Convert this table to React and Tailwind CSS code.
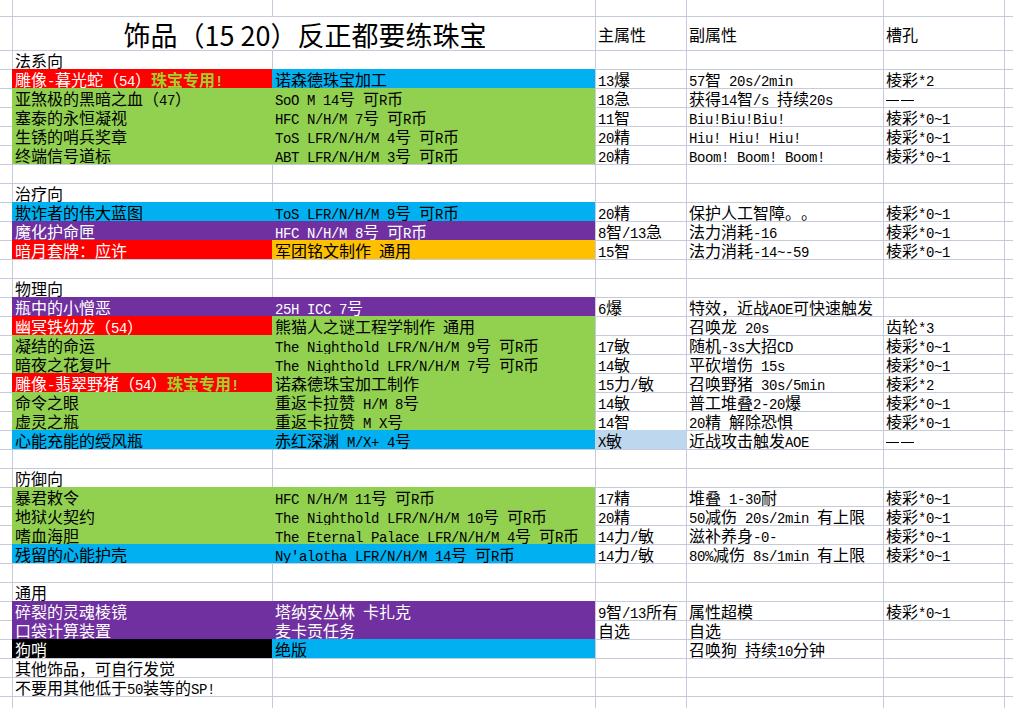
import React from 'react'

const cols = 'grid grid-cols-[12px_260px_323px_91px_197px_121px_9px]'

const fills = {
  red: 'bg-[#ff0000] border-[#ff0000] text-white',
  blue: 'bg-[#00b0f0] border-[#00b0f0] text-black',
  green: 'bg-[#92d050] border-[#92d050] text-black',
  purple: 'bg-[#7030a0] border-[#7030a0] text-white',
  orange: 'bg-[#ffc000] border-[#ffc000] text-black',
  black: 'bg-black border-black text-white',
  pale: 'bg-[#bdd7ee] border-[#bdd7ee] text-black',
}
const plain = 'bg-white border-[#c6cbdb] text-black'

// ascii runs get a narrow mono face so they take half a CJK cell, like SimSun
const Txt = ({ s }) => {
  if (!s) return null
  if (s === '——') {
    return (
      <span className="inline-flex gap-[2px] align-middle">
        <span className="inline-block h-[1px] w-[13px] bg-current" />
        <span className="inline-block h-[1px] w-[13px] bg-current" />
      </span>
    )
  }
  const parts = s.split(/([\x20-\x7e]+|（|）)/)
  return parts.map((p, i) => {
    if (p === '（') return <span key={i} className="inline-block w-[16px] text-right">（</span>
    if (p === '）') return <span key={i} className="inline-block w-[16px] text-left">）</span>
    if (/^[\x20-\x7e]+$/.test(p))
      return (
        <span key={i} className="font-['Liberation_Mono',monospace] text-[14px] tracking-[-0.4px]">{p}</span>
      )
    return p ? <span key={i}>{p}</span> : null
  })
}

const Cell = ({ children, fill, first, top = true, className = '' }) => (
  <div
    className={`h-full overflow-hidden whitespace-pre pl-[2px] ${first ? '' : 'border-l'} ${top ? 'border-t' : ''} ${fill ? fills[fill] : plain} ${className}`}
  >
    {children}
  </div>
)

const rows = [
  { a: '法系向' },
  { a: '雕像-暮光蛇（54）', hl: '珠宝专用!', aBg: 'red', b: '诺森德珠宝加工', bBg: 'blue', c: '13爆', d: '57智 20s/2min', e: '棱彩*2' },
  { a: '亚煞极的黑暗之血（47）', aBg: 'green', b: 'SoO M 14号 可R币', bBg: 'green', c: '18急', d: '获得14智/s 持续20s', e: '——' },
  { a: '塞泰的永恒凝视', aBg: 'green', b: 'HFC N/H/M 7号 可R币', bBg: 'green', c: '11智', d: 'Biu!Biu!Biu!', e: '棱彩*0~1' },
  { a: '生锈的哨兵奖章', aBg: 'green', b: 'ToS LFR/N/H/M 4号 可R币', bBg: 'green', c: '20精', d: 'Hiu! Hiu! Hiu!', e: '棱彩*0~1' },
  { a: '终端信号道标', aBg: 'green', b: 'ABT LFR/N/H/M 3号 可R币', bBg: 'green', c: '20精', d: 'Boom! Boom! Boom!', e: '棱彩*0~1' },
  {},
  { a: '治疗向' },
  { a: '欺诈者的伟大蓝图', aBg: 'blue', b: 'ToS LFR/N/H/M 9号 可R币', bBg: 'blue', c: '20精', d: '保护人工智障。。', e: '棱彩*0~1' },
  { a: '魔化护命匣', aBg: 'purple', b: 'HFC N/H/M 8号 可R币', bBg: 'purple', c: '8智/13急', d: '法力消耗-16', e: '棱彩*0~1' },
  { a: '暗月套牌：应许', aBg: 'red', b: '军团铭文制作 通用', bBg: 'orange', c: '15智', d: '法力消耗-14~-59', e: '棱彩*0~1' },
  {},
  { a: '物理向' },
  { a: '瓶中的小憎恶', aBg: 'purple', b: '25H ICC 7号', bBg: 'purple', c: '6爆', d: '特效，近战AOE可快速触发', e: '' },
  { a: '幽冥铁幼龙（54）', aBg: 'red', b: '熊猫人之谜工程学制作 通用', bBg: 'green', c: '', d: '召唤龙 20s', e: '齿轮*3' },
  { a: '凝结的命运', aBg: 'green', b: 'The Nighthold LFR/N/H/M 9号 可R币', bBg: 'green', c: '17敏', d: '随机-3s大招CD', e: '棱彩*0~1' },
  { a: '暗夜之花复叶', aBg: 'green', b: 'The Nighthold LFR/N/H/M 7号 可R币', bBg: 'green', c: '14敏', d: '平砍增伤 15s', e: '棱彩*0~1' },
  { a: '雕像-翡翠野猪（54）', hl: '珠宝专用!', aBg: 'red', b: '诺森德珠宝加工制作', bBg: 'green', c: '15力/敏', d: '召唤野猪 30s/5min', e: '棱彩*2' },
  { a: '命令之眼', aBg: 'green', b: '重返卡拉赞 H/M 8号', bBg: 'green', c: '14敏', d: '普工堆叠2-20爆', e: '棱彩*0~1' },
  { a: '虚灵之瓶', aBg: 'green', b: '重返卡拉赞 M X号', bBg: 'green', c: '14智', d: '20精 解除恐惧', e: '棱彩*0~1' },
  { a: '心能充能的绶风瓶', aBg: 'blue', b: '赤红深渊 M/X+ 4号', bBg: 'blue', c: 'X敏', cBg: 'pale', d: '近战攻击触发AOE', e: '——' },
  {},
  { a: '防御向' },
  { a: '暴君敕令', aBg: 'green', b: 'HFC N/H/M 11号 可R币', bBg: 'green', c: '17精', d: '堆叠 1-30耐', e: '棱彩*0~1' },
  { a: '地狱火契约', aBg: 'green', b: 'The Nighthold LFR/N/H/M 10号 可R币', bBg: 'green', c: '20精', d: '50减伤 20s/2min 有上限', e: '棱彩*0~1' },
  { a: '嗜血海胆', aBg: 'green', b: 'The Eternal Palace LFR/N/H/M 4号 可R币', bBg: 'green', c: '14力/敏', d: '滋补养身-0-', e: '棱彩*0~1' },
  { a: '残留的心能护壳', aBg: 'blue', b: "Ny'alotha LFR/N/H/M 14号 可R币", bBg: 'blue', c: '14力/敏', d: '80%减伤 8s/1min 有上限', e: '棱彩*0~1' },
  {},
  { a: '通用' },
  { a: '碎裂的灵魂棱镜', aBg: 'purple', b: '塔纳安丛林 卡扎克', bBg: 'purple', c: '9智/13所有', d: '属性超模', e: '棱彩*0~1' },
  { a: '口袋计算装置', aBg: 'purple', b: '麦卡贡任务', bBg: 'purple', c: '自选', d: '自选', e: '' },
  { a: '狗哨', aBg: 'black', b: '绝版', bBg: 'blue', c: '', d: '召唤狗 持续10分钟', e: '' },
  { a: '其他饰品，可自行发觉' },
  { a: '不要用其他低于50装等的SP!' },
  {},
]

const Row = ({ r }) => (
  <div className={`${cols} h-[19px] leading-[19px]`}>
    <Cell first />
    <Cell fill={r.aBg}>
      <Txt s={r.a} />
      {r.hl && <span className="font-bold text-[#a2d12c]"><Txt s={r.hl} /></span>}
    </Cell>
    <Cell fill={r.bBg}><Txt s={r.b} /></Cell>
    <Cell fill={r.cBg}><Txt s={r.c} /></Cell>
    <Cell><Txt s={r.d} /></Cell>
    <Cell><Txt s={r.e} /></Cell>
    <Cell />
  </div>
)

export default function App() {
  return (
    <div
      lang="zh-CN"
      className="h-[708px] w-[1013px] overflow-hidden bg-white font-['Noto_Sans_CJK_SC',sans-serif] text-[16px] text-black [text-spacing-trim:space-all]"
    >
      <div className={`${cols} h-[16px]`}>
        <Cell first top={false} />
        <Cell top={false} />
        <Cell top={false} />
        <Cell top={false} />
        <Cell top={false} />
        <Cell top={false} />
        <Cell top={false} />
      </div>
      <div className={`${cols} h-[34px]`}>
        <Cell first />
        <Cell className="col-span-2 flex items-center justify-center text-[27px] leading-none">
          <span className="pt-[2px]">饰品（15 20）反正都要练珠宝</span>
        </Cell>
        <Cell className="flex items-center">主属性</Cell>
        <Cell className="flex items-center">副属性</Cell>
        <Cell className="flex items-center">槽孔</Cell>
        <Cell />
      </div>
      {rows.map((r, i) => (
        <Row key={i} r={r} />
      ))}
    </div>
  )
}
